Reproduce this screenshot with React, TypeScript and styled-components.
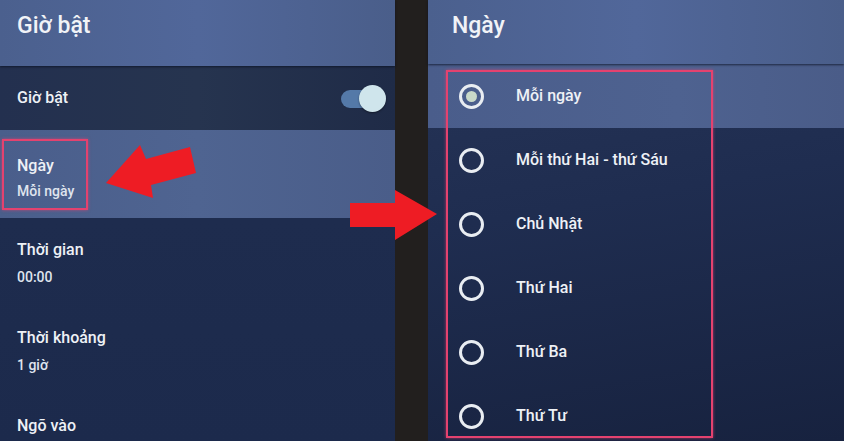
import styled, { createGlobalStyle } from "styled-components"

const GlobalStyle = createGlobalStyle`
    html, body {
        margin: 0;
        padding: 0;
        background: #15203a;
        font-family: Roboto, "Noto Sans", "Liberation Sans", sans-serif;
    }
    * {
        box-sizing: border-box;
    }
`

const Screen = styled.div`
    position: relative;
    width: 844px;
    height: 441px;
    display: flex;
    overflow: hidden;
    color: #eef1f6;
`

const Panel = styled.div<{ $width?: number; $bg: string }>`
    display: flex;
    flex-direction: column;
    ${p => (p.$width ? `width: ${p.$width}px;` : "flex: 1 1;")}
    height: 100%;
    background: ${p => p.$bg};
    position: relative;
`

const Divider = styled.div`
    width: 33px;
    height: 100%;
    background: #221f1e;
`

const Header = styled.div<{ $height: number; $pad: number }>`
    height: ${p => p.$height}px;
    flex: 0 0 auto;
    padding: 12px ${p => p.$pad}px 0;
    background: linear-gradient(90deg, #4b608e 0%, #51679a 50%, #4a5e8a 100%);
    box-shadow: 0 1px 2px rgba(10, 16, 32, 0.7);
    position: relative;
    z-index: 1;
    h1 {
        margin: 0;
        font-size: 23px;
        line-height: 28px;
        font-weight: 500;
        color: #f1f3f7;
    }
`

const Row = styled.div<{ $height: number; $bg?: string; $padLeft?: number }>`
    height: ${p => p.$height}px;
    flex: 0 0 auto;
    display: flex;
    align-items: center;
    padding: 0 9px 0 ${p => p.$padLeft ?? 17}px;
    background: ${p => p.$bg ?? "transparent"};
`

const TwoLine = styled.div`
    display: flex;
    flex-direction: column;
    align-self: flex-start;
    padding-top: 22px;
    gap: 8px;
`

const Highlight = styled.div`
    display: flex;
    flex-direction: column;
    gap: 6px;
    width: 86px;
    height: 71px;
    padding: 15px 0 0 13px;
    border: 2px solid #e4426f;
    box-shadow: 0 0 3px rgba(228, 66, 111, 0.7);
`

const Title = styled.div`
    font-size: 16px;
    line-height: 20px;
    font-weight: 500;
    color: #eef1f6;
    white-space: nowrap;
`

const Sub = styled.div`
    font-size: 14px;
    line-height: 18px;
    font-weight: 500;
    color: #dfe4ee;
    white-space: nowrap;
`

const Toggle = styled.div`
    margin-left: auto;
    position: relative;
    width: 45px;
    height: 27px;
    &::before {
        content: "";
        position: absolute;
        left: 0;
        top: 5px;
        width: 36px;
        height: 18px;
        border-radius: 9px;
        background: #5479a8;
    }
    &::after {
        content: "";
        position: absolute;
        right: 0;
        top: 0;
        width: 27px;
        height: 27px;
        border-radius: 50%;
        background: #cfe5ec;
        box-shadow: 0 1px 2px rgba(0, 0, 0, 0.4);
    }
`

const RadioRow = styled.div<{ $active?: boolean }>`
    height: 64px;
    flex: 0 0 auto;
    display: flex;
    align-items: center;
    gap: 32px;
    padding-left: 31px;
    background: ${p => (p.$active ? "linear-gradient(90deg, #4a5d8b, #4e6290 60%, #4a5c88)" : "transparent")};
`

const Radio = styled.div<{ $checked?: boolean }>`
    width: 25px;
    height: 25px;
    border-radius: 50%;
    border: 3px solid #e9edf2;
    display: flex;
    align-items: center;
    justify-content: center;
    &::after {
        content: "";
        display: ${p => (p.$checked ? "block" : "none")};
        width: 11px;
        height: 11px;
        border-radius: 50%;
        background: #c9d9c9;
    }
`

const Frame = styled.div`
    position: absolute;
    left: 18px;
    top: 70px;
    width: 267px;
    height: 368px;
    border: 2px solid #e4426f;
    box-shadow: 0 0 3px rgba(228, 66, 111, 0.7);
    pointer-events: none;
`

const Arrows = styled.svg`
    position: absolute;
    left: 0;
    top: 0;
    pointer-events: none;
`

const days = [
    "Mỗi ngày",
    "Mỗi thứ Hai - thứ Sáu",
    "Chủ Nhật",
    "Thứ Hai",
    "Thứ Ba",
    "Thứ Tư",
]

const settings = [
    { title: "Thời gian", value: "00:00" },
    { title: "Thời khoảng", value: "1 giờ" },
    { title: "Ngõ vào", value: "" },
]

export const App = () => {
    return (
        <>
            <GlobalStyle />
            <Screen>
                <Panel $width={395} $bg="linear-gradient(180deg, #22304f 0%, #1e2c4e 50%, #1c2a4c 100%)">
                    <Header $height={66} $pad={17}>
                        <h1>Giờ bật</h1>
                    </Header>
                    <Row $height={64} $bg="linear-gradient(90deg, #23304f, #26344f 50%, #1f2b47)">
                        <Title>Giờ bật</Title>
                        <Toggle />
                    </Row>
                    <Row $height={88} $padLeft={2} $bg="linear-gradient(90deg, #4a5e8b, #4f6491 50%, #4a5d89)">
                        <Highlight>
                            <Title>Ngày</Title>
                            <Sub>Mỗi ngày</Sub>
                        </Highlight>
                    </Row>
                    {settings.map(s => (
                        <Row key={s.title} $height={88}>
                            <TwoLine>
                                <Title>{s.title}</Title>
                                {s.value && <Sub>{s.value}</Sub>}
                            </TwoLine>
                        </Row>
                    ))}
                </Panel>
                <Divider />
                <Panel $bg="linear-gradient(170deg, #273558 0%, #1f2d50 45%, #17223f 100%)">
                    <Header $height={64} $pad={24}>
                        <h1>Ngày</h1>
                    </Header>
                    {days.map((d, i) => (
                        <RadioRow key={d} $active={i === 0}>
                            <Radio $checked={i === 0} />
                            <Title>{d}</Title>
                        </RadioRow>
                    ))}
                    <Frame />
                </Panel>
                <Arrows width={844} height={441} viewBox="0 0 844 441">
                    <polygon
                        fill="#ee1c24"
                        points="106,183 140,145 146,159 190,147 196,173 151,185 153,198"
                    />
                    <polygon
                        fill="#ee1c24"
                        points="350,203 395,203 395,190 437,214 395,240 395,227 350,227"
                    />
                </Arrows>
            </Screen>
        </>
    )
}

export default App
